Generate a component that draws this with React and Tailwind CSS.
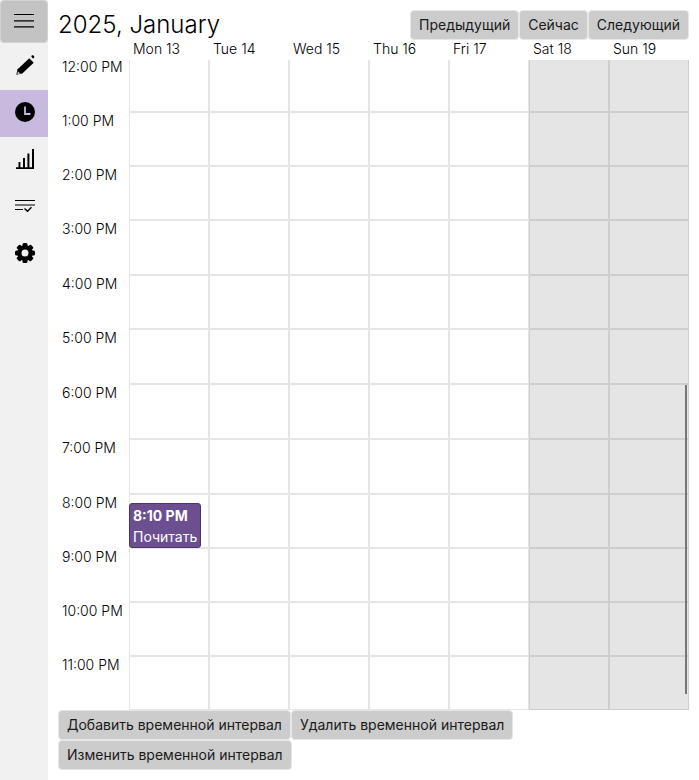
import React from 'react';

const days = [
  { name: 'Mon 13' },
  { name: 'Tue 14' },
  { name: 'Wed 15' },
  { name: 'Thu 16' },
  { name: 'Fri 17' },
  { name: 'Sat 18', weekend: true },
  { name: 'Sun 19', weekend: true },
];

// The first hour is scrolled slightly under the header, so it has no top border.
const hours = [
  { label: '12:00 PM', height: 'h-[52px]', first: true },
  { label: '1:00 PM', height: 'h-[54px]' },
  { label: '2:00 PM', height: 'h-[54px]' },
  { label: '3:00 PM', height: 'h-[55px]' },
  { label: '4:00 PM', height: 'h-[54px]' },
  { label: '5:00 PM', height: 'h-[55px]' },
  { label: '6:00 PM', height: 'h-[55px]' },
  { label: '7:00 PM', height: 'h-[55px]' },
  { label: '8:00 PM', height: 'h-[54px]', event: { time: '8:10 PM', title: 'Почитать' } },
  { label: '9:00 PM', height: 'h-[54px]' },
  { label: '10:00 PM', height: 'h-[54px]' },
  { label: '11:00 PM', height: 'h-[54px]' },
];

function Icon({ children }) {
  return (
    <svg width="20" height="20" viewBox="0 0 20 20" aria-hidden="true">
      {children}
    </svg>
  );
}

const MenuIcon = () => (
  <Icon>
    <path d="M0 3h20v1H0zM0 9.300h20v1.300H0zM0 15.300h20v1.300H0z" />
  </Icon>
);

const PencilIcon = () => (
  <Icon>
    <path d="M14.300 3.300 18.700 7.700 7.300 18.600 1.300 19.800 2.600 14.300z" />
    <path d="M16.200 1.200a1.600 1.600 0 1 1 2 2.200L17.400 2.900z" />
    <path d="M3 16.600 5.600 18.600 2.200 19.200z" fill="#f1f1f1" />
    <path d="M3.600 17.600h1v1h-1z" />
  </Icon>
);

const ClockIcon = () => (
  <Icon>
    <circle cx="10" cy="10" r="10" />
    <path d="M10 4.500V12h5.500" fill="none" stroke="#c8b9de" strokeWidth="1.8" />
  </Icon>
);

const ChartIcon = () => (
  <Icon>
    <path d="M1 18.300h18V20H1zM3.500 13h1.900v6H3.500zM8 9h2v10H8zM12.400 4.500h2v14h-2zM17 0h2v20h-2z" />
  </Icon>
);

const TasksIcon = () => (
  <Icon>
    <path d="M0 4h20v1H0zM0 13h8v1H0z" />
    <path d="M0 8h20v2H0z" fill="#777" />
    <path d="m9.500 12.500 3 2.800 4-4" fill="none" stroke="#000" strokeWidth="1.4" />
  </Icon>
);

const GearIcon = () => (
  <Icon>
    {[0, 45, 90, 135].map((angle) => (
      <rect key={angle} x="7.500" y="0" width="5" height="20" rx="1.500" transform={`rotate(${angle} 10 10)`} />
    ))}
    <circle cx="10" cy="10" r="7.800" />
    <circle cx="10" cy="10" r="3.500" fill="#f1f1f1" />
  </Icon>
);

const sections = [
  { label: 'Редактор', icon: <PencilIcon /> },
  { label: 'Время', icon: <ClockIcon />, active: true },
  { label: 'Статистика', icon: <ChartIcon /> },
  { label: 'Задачи', icon: <TasksIcon /> },
  { label: 'Настройки', icon: <GearIcon /> },
];

function Button({ children }) {
  return (
    <button className="h-[30px] whitespace-nowrap rounded border border-[#e6e6e6] bg-[#cccccc] px-2 font-normal leading-5 text-[#1a1a1a]">
      {children}
    </button>
  );
}

function Cell({ weekend, first, children }) {
  return (
    <div
      className={`relative min-w-0 flex-1 border ${first ? 'border-t-0' : ''} ${
        weekend ? 'border-[#cecece] bg-[#e5e5e5]' : 'border-[#e5e5e5]'
      }`}
    >
      {children}
    </div>
  );
}

export default function App() {
  return (
    <div className="flex min-h-screen bg-white font-['Inter',sans-serif] text-sm font-light text-black">
      <nav className="flex w-12 shrink-0 flex-col bg-[#f1f1f1]">
        <button
          aria-label="Меню"
          className="flex h-[43px] items-center justify-center rounded border border-[#d2d2d2] bg-[#c3c3c3] pb-px"
        >
          <MenuIcon />
        </button>
        {sections.map((s) => (
          <button
            key={s.label}
            aria-label={s.label}
            className={`flex h-[47px] items-center justify-center pb-[3px] pl-0.5 ${s.active ? 'bg-[#c8b9de]' : ''}`}
          >
            {s.icon}
          </button>
        ))}
      </nav>

      <main className="min-w-0 flex-1 p-2.5">
        <header className="flex h-[30px] items-center justify-between">
          <h1 className="text-2xl">2025, January</h1>
          <div className="flex">
            <Button>Предыдущий</Button>
            <Button>Сейчас</Button>
            <Button>Следующий</Button>
          </div>
        </header>

        <div className="flex h-5 pl-[71px] leading-[18px]">
          {days.map((d) => (
            <div key={d.name} className="flex-1 pl-1">
              {d.name}
            </div>
          ))}
        </div>

        <section className="relative">
          {hours.map((h) => (
            <div key={h.label} className={`flex ${h.height}`}>
              <div className={`w-[71px] shrink-0 whitespace-nowrap pl-1 leading-[18px] ${h.first ? '-mt-0.5' : ''}`}>
                {h.label}
              </div>
              {days.map((d, i) => (
                <Cell key={d.name} weekend={d.weekend} first={h.first}>
                  {h.event && i === 0 && (
                    <div className="absolute -left-px top-2 h-[45px] w-[72px] overflow-hidden whitespace-nowrap rounded-[3px] border border-[#4b3668] bg-[#6b4f91] px-[3px] pt-px leading-[21px] text-white">
                      <div className="font-bold">{h.event.time}</div>
                      <div className="font-normal">{h.event.title}</div>
                    </div>
                  )}
                </Cell>
              ))}
            </div>
          ))}
          <div className="absolute bottom-4 right-0.5 h-[309px] w-0.5 bg-[#767676]" />
        </section>

        <footer className="flex flex-wrap">
          <Button>Добавить временной интервал</Button>
          <Button>Удалить временной интервал</Button>
          <Button>Изменить временной интервал</Button>
        </footer>
      </main>
    </div>
  );
}
